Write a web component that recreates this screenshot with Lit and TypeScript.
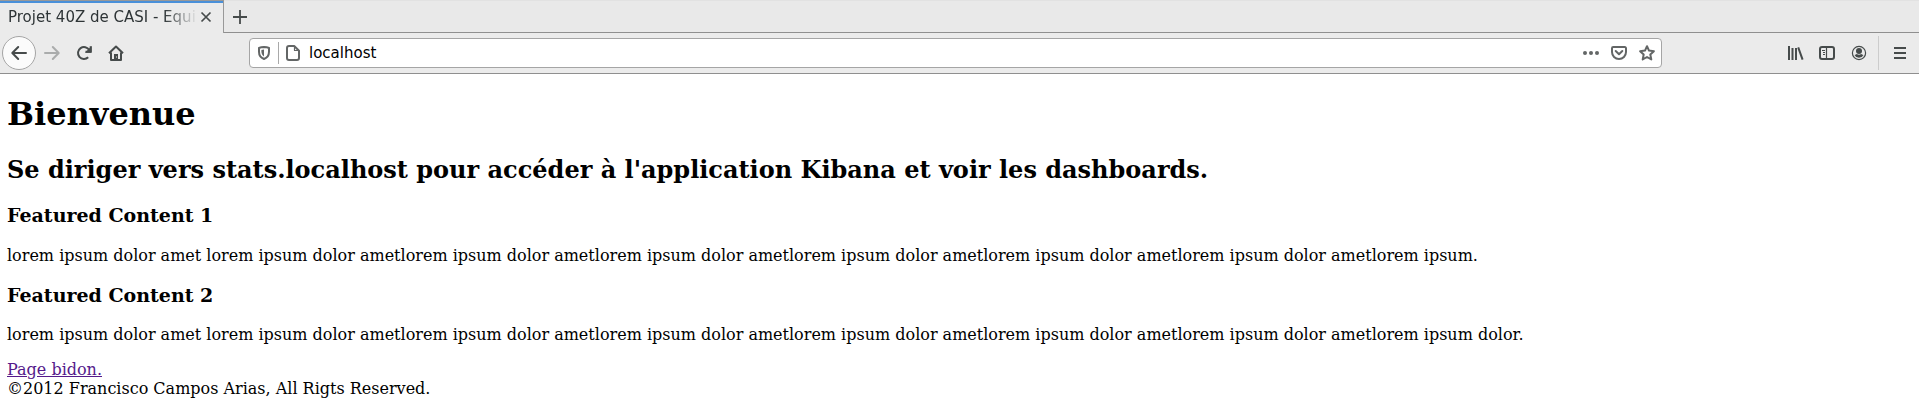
import { LitElement, html, css, svg } from "lit";
import { customElement } from "lit/decorators.js";

const icon = (body: unknown, cls = "") =>
  html`<svg class="icon ${cls}" viewBox="0 0 16 16" width="16" height="16">${body}</svg>`;

const arrow = svg`<path d="M15 8H1.5M7.2 2L1.3 8l5.9 6"/>`;
const reload = svg`<path d="M13.2 5A6 6 0 1 0 12.2 12.3M14.7 1.2V6.7H9.5"/><path class="fill" d="M15.6 1v6.7H9z"/>`;
const home = svg`<path d="M1 8.3L8 1.5l7 6.8M3 7.5V15h10V7.5"/><path class="fill" d="M6 9h4v6H6z"/><path class="hole" d="M8 11.5h1v1H8z"/>`;
const shield = svg`<path d="M8 2c2 .1 3.6.4 5 1v3.7c0 3.7-2 6.1-5 7.3-3-1.2-5-3.6-5-7.3V3c1.4-.6 3-.9 5-1z"/><path class="fill" d="M8 4.5v7C6.2 10.3 5.4 8.700 5.400 6.500V5C6.200 4.700 7 4.500 8 4.500z"/>`;
const page = svg`<path d="M4 1h5.200L14 5.800V13a2 2 0 0 1-2 2H4a2 2 0 0 1-2-2V3a2 2 0 0 1 2-2z"/><path class="thin" d="M9.500 1v4.500H14"/>`;
const dots = svg`<circle class="fill" cx="2" cy="8" r="2"/><circle class="fill" cx="8" cy="8" r="2"/><circle class="fill" cx="14" cy="8" r="2"/>`;
const pocket = svg`<path d="M2.200 2h11.600a1.200 1.200 0 0 1 1.200 1.200V7A7 7 0 0 1 1 7V3.200A1.200 1.200 0 0 1 2.200 2z"/><path d="M4.700 6L8 9.200 11.300 6"/>`;
const star = svg`<path d="M8 1.200l2 4.400 4.900.6-3.600 3.300 1 4.900L8 12l-4.300 2.400 1-4.900L1.100 6.200l4.900-.6z"/>`;
const library = svg`<path d="M2 1v14M5.500 3v12M9 3v12M11.200 2.300l4.400 12.400"/>`;
const sidebar = svg`<rect x="1" y="2" width="14" height="12" rx="2"/><path class="thin" d="M7.500 2v12M3 5.500h3M4 7.500h2M4 9.500h2"/>`;
const account = svg`<circle class="thin" cx="8" cy="8" r="6.600"/><circle class="fill" cx="8" cy="6" r="3"/><path class="fill" d="M3.500 10c1 .1 1.600-.5 2.300-.9a4 4 0 0 0 4.400 0c.7.400 1.300 1 2.300.9A5 5 0 0 1 3.500 10z"/>`;
const menu = svg`<path d="M2 3h12M2 8h12M2 13h12"/>`;
const close = svg`<path d="M3.500 3.500l9 9M12.500 3.500l-9 9"/>`;
const plus = svg`<path d="M8 1v14M1 8h14"/>`;

@customElement("app-root")
export class AppRoot extends LitElement {
  static styles = css`
    :host { display: block; height: 417px; overflow: hidden; background: #fff; color: #000;
      font: 16px "DejaVu Serif", serif; }
    * { box-sizing: border-box; }
    .icon { flex: none; display: block; fill: none; stroke: currentColor; stroke-width: 2;
      stroke-linejoin: round; stroke-linecap: round; overflow: visible; }
    .fill { fill: currentColor; stroke: none; }
    .hole { fill: #ebebeb; stroke: none; }
    .thin { stroke-width: 1.2; stroke-linecap: butt; }
    .chrome { font: 15px/20px "DejaVu Sans", sans-serif; color: #464b4b; background: #ebebeb; }
    .tabs { display: flex; height: 33px; background: #e9e9e9; }
    .tab { display: flex; align-items: center; width: 224px; padding: 0 9px 0 8px; background: #ebebeb;
      border-top: 1px solid #999; border-right: 1px solid #999; box-shadow: inset 0 2px #4a90d9; }
    .title { flex: 1; min-width: 0; color: #2e3436; white-space: nowrap;
      -webkit-mask-image: linear-gradient(to left, transparent 0, #000 34px);
      mask-image: linear-gradient(to left, transparent 0, #000 34px); }
    .close { stroke-width: 1.7; stroke-linecap: butt; }
    .rest { flex: 1; display: flex; align-items: center; padding-left: 8px;
      border-top: 1px solid #e2e2e2; border-bottom: 1px solid #8f8f8f; }
    .plus { stroke-width: 1.8; stroke-linecap: butt; }
    .bar { display: flex; align-items: center; height: 41px; border-bottom: 1px solid #8f8f8f; }
    .back { display: grid; place-items: center; width: 34px; height: 34px; margin-left: 2px;
      border: 1px solid #a5a5a5; border-radius: 50%; background: #fbfbfb; }
    .forward { transform: scaleX(-1); color: #aaacac; margin-left: 8px; }
    .reload, .home { margin-left: 16px; stroke-linecap: butt; }
    .url { display: flex; align-items: center; width: 1413px; height: 30px; margin-left: 125px; padding: 0 6px;
      border: 1px solid #a5a5a5; border-radius: 4px; background: #fff; color: #636666; }
    .sep { width: 1px; height: 22px; margin: 0 6px; background: #a9a9a9; }
    .host { flex: 1; margin-left: 8px; color: #000; }
    .dots, .pocket { margin-right: 12px; }
    .tools { display: flex; align-items: center; flex: 1; padding-left: 125px; gap: 16px; }
    .library, .menu { stroke-linecap: butt; }
    .rule { width: 1px; height: 34px; background: #ccc; margin: 0 -3px 0 -5px; }
    .body { display: flow-root; padding: 0 7px; }
    h3 { font-size: 19px; }
    .first { margin-bottom: 20px; }
    .link { color: #551a8b; }
  `;

  render() {
    return html`
      <div class="chrome">
        <div class="tabs">
          <div class="tab"><span class="title">Projet 40Z de CASI - Equi</span>${icon(close, "close")}</div>
          <div class="rest">${icon(plus, "plus")}</div>
        </div>
        <div class="bar">
          <div class="back">${icon(arrow)}</div>
          ${icon(arrow, "forward")} ${icon(reload, "reload")} ${icon(home, "home")}
          <div class="url">
            ${icon(shield)}<span class="sep"></span>${icon(page)}
            <span class="host">localhost</span>
            ${icon(dots, "dots")} ${icon(pocket, "pocket")} ${icon(star)}
          </div>
          <div class="tools">
            ${icon(library, "library")} ${icon(sidebar)} ${icon(account)}
            <span class="rule"></span>${icon(menu, "menu")}
          </div>
        </div>
      </div>
      <main class="body">
        <h1>Bienvenue</h1>
        <h2>Se diriger vers stats.localhost pour accéder à l'application Kibana et voir les dashboards.</h2>
        <h3 class="first">Featured Content 1</h3>
        <p>lorem ipsum dolor amet lorem ipsum dolor ametlorem ipsum dolor ametlorem ipsum dolor ametlorem ipsum dolor ametlorem ipsum dolor ametlorem ipsum dolor ametlorem ipsum.</p>
        <h3>Featured Content 2</h3>
        <p>lorem ipsum dolor amet lorem ipsum dolor ametlorem ipsum dolor ametlorem ipsum dolor ametlorem ipsum dolor ametlorem ipsum dolor ametlorem ipsum dolor ametlorem ipsum dolor.</p>
        <div><a class="link" href="#">Page bidon.</a></div>
        <div>©2012 Francisco Campos Arias, All Rigts Reserved.</div>
      </main>
    `;
  }
}
